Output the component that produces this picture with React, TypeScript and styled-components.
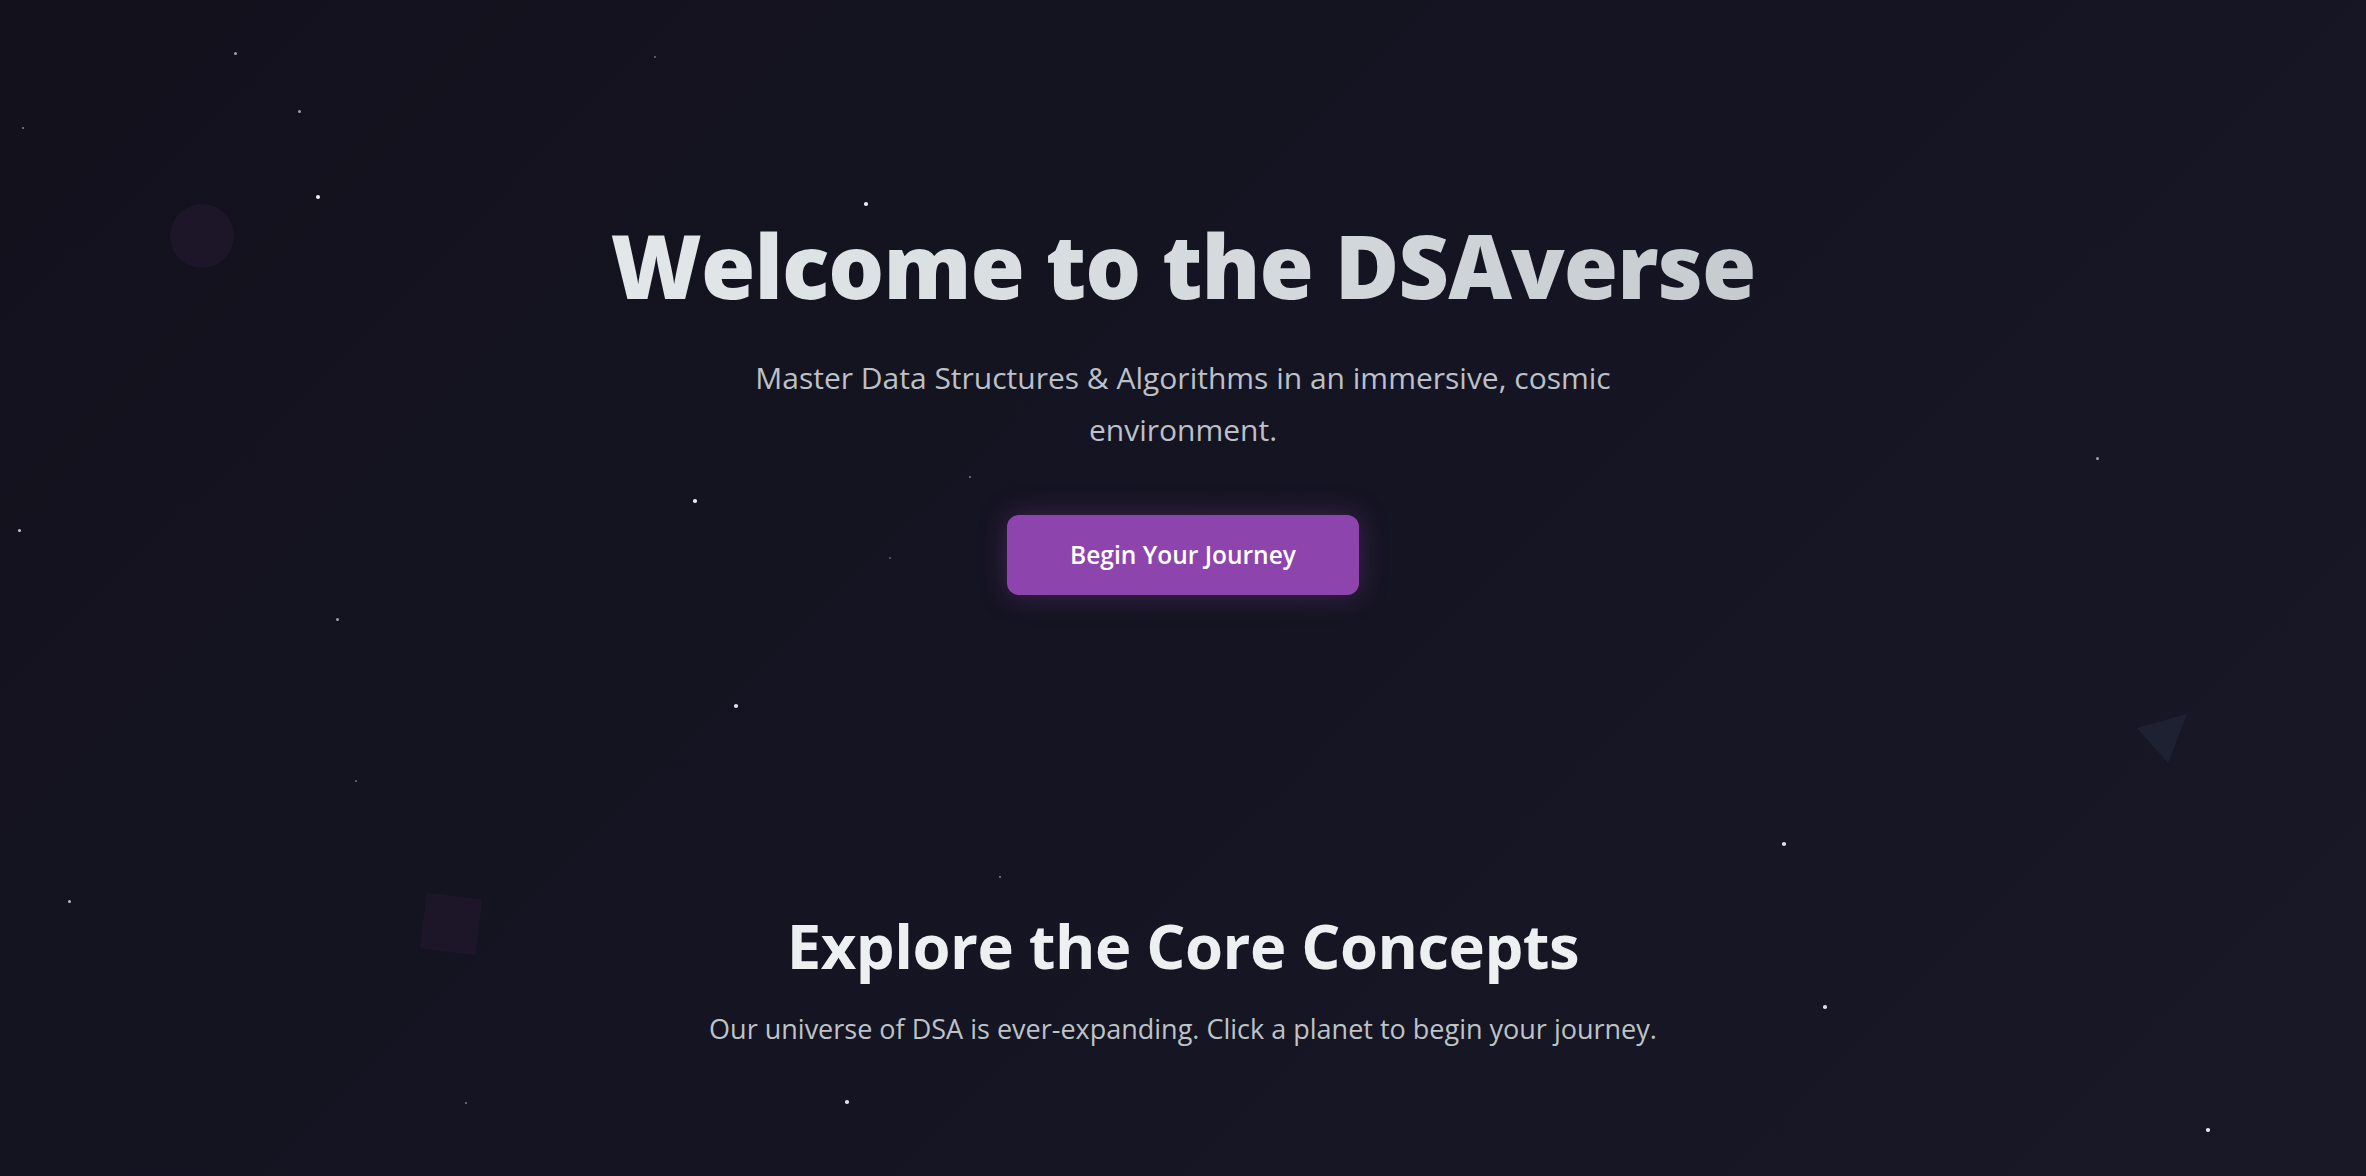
import React from "react";
import styled, { createGlobalStyle } from "styled-components";

const GlobalStyle = createGlobalStyle`
  html, body {
    margin: 0;
    padding: 0;
    background: #13121e;
  }
  body {
    font-family: "Open Sans", "Noto Sans", "Liberation Sans", sans-serif;
    color: #ecf0f1;
    overflow: hidden;
  }
  * { box-sizing: border-box; }
`;

const Page = styled.div`
  position: relative;
  width: 100%;
  height: 1176px;
  overflow: hidden;
  background: linear-gradient(135deg, #12111c 0%, #151422 50%, #191827 100%);
`;

const Sky = styled.div`
  position: absolute;
  inset: 0;
  pointer-events: none;
`;

const Star = styled.span<{ $size: number; $alpha: number }>`
  position: absolute;
  width: ${(p) => p.$size}px;
  height: ${(p) => p.$size}px;
  margin: ${(p) => -p.$size / 2}px 0 0 ${(p) => -p.$size / 2}px;
  border-radius: 50%;
  background: rgba(255, 255, 255, ${(p) => p.$alpha});
`;

const Planetoid = styled.span`
  position: absolute;
  left: 170px;
  top: 204px;
  width: 64px;
  height: 64px;
  border-radius: 50%;
  background: #1c1628;
`;

const Cube = styled.span`
  position: absolute;
  left: 423px;
  top: 896px;
  width: 56px;
  height: 56px;
  background: #1c1628;
  transform: rotate(7deg);
`;

const Shard = styled.svg`
  position: absolute;
  left: 2130px;
  top: 708px;
  width: 64px;
  height: 64px;
`;

const Content = styled.main`
  position: relative;
  display: flex;
  flex-direction: column;
  align-items: center;
  text-align: center;
`;

const Hero = styled.section`
  display: flex;
  flex-direction: column;
  align-items: center;
  padding-top: 213px;
`;

const Title = styled.h1`
  margin: 0;
  font-size: 88px;
  font-weight: 800;
  line-height: 1.2;
  letter-spacing: -1px;
  background: linear-gradient(90deg, #e2e7ea 0%, #d3d8dc 60%, #c6cbd0 100%);
  -webkit-background-clip: text;
  background-clip: text;
  color: transparent;
`;

const Lead = styled.p`
  margin: 33px 0 0;
  max-width: 900px;
  font-size: 30px;
  line-height: 52px;
  color: #bcc0c8;
`;

const CTA = styled.button`
  margin-top: 59px;
  width: 352px;
  height: 80px;
  border: none;
  border-radius: 12px;
  background: #8e44ad;
  color: #ffffff;
  font-family: inherit;
  font-size: 24.5px;
  font-weight: 600;
  box-shadow: 0 0 28px rgba(142, 68, 173, 0.35);
  cursor: pointer;
`;

const Concepts = styled.section`
  display: flex;
  flex-direction: column;
  align-items: center;
  margin-top: 314px;
`;

const SectionTitle = styled.h2`
  margin: 0;
  font-size: 61.5px;
  font-weight: 700;
  line-height: 1.2;
  letter-spacing: -0.5px;
  color: #ecf0f1;
`;

const SectionLead = styled.p`
  margin: 25px 0 0;
  font-size: 27px;
  line-height: 1.6;
  color: #bdc3c7;
`;

const stars: [number, number, number, number][] = [
  [235, 53, 3, 0.6],
  [655, 57, 2.5, 0.4],
  [23, 128, 2.5, 0.5],
  [299, 111, 3, 0.6],
  [318, 197, 4, 0.95],
  [866, 204, 3.5, 0.9],
  [970, 477, 2.5, 0.45],
  [695, 501, 3.5, 0.9],
  [19, 530, 3, 0.75],
  [2097, 458, 3, 0.6],
  [890, 558, 2, 0.35],
  [337, 619, 3, 0.6],
  [736, 706, 3.5, 0.85],
  [356, 781, 2.5, 0.4],
  [1784, 844, 3.5, 0.85],
  [1000, 877, 2.5, 0.45],
  [69, 901, 3, 0.7],
  [1825, 1007, 3.5, 0.85],
  [466, 1103, 2.5, 0.45],
  [847, 1102, 3.5, 0.85],
  [2208, 1130, 3.5, 0.9],
  [1290, 527, 3, 0.35],
  [1343, 587, 3, 0.35],
];

export default function App() {
  return (
    <>
      <GlobalStyle />
      <Page>
        <Sky>
          <Planetoid />
          <Cube />
          <Shard viewBox="0 0 64 64">
            <polygon points="7,20 57,6 38,55" fill="#1e2132" />
          </Shard>
          {stars.map(([x, y, s, a], i) => (
            <Star key={i} $size={s} $alpha={a} style={{ left: x, top: y }} />
          ))}
        </Sky>
        <Content>
          <Hero>
            <Title>Welcome to the DSAverse</Title>
            <Lead>
              Master Data Structures &amp; Algorithms in an immersive, cosmic
              environment.
            </Lead>
            <CTA>Begin Your Journey</CTA>
          </Hero>
          <Concepts>
            <SectionTitle>Explore the Core Concepts</SectionTitle>
            <SectionLead>
              Our universe of DSA is ever-expanding. Click a planet to begin
              your journey.
            </SectionLead>
          </Concepts>
        </Content>
      </Page>
    </>
  );
}
